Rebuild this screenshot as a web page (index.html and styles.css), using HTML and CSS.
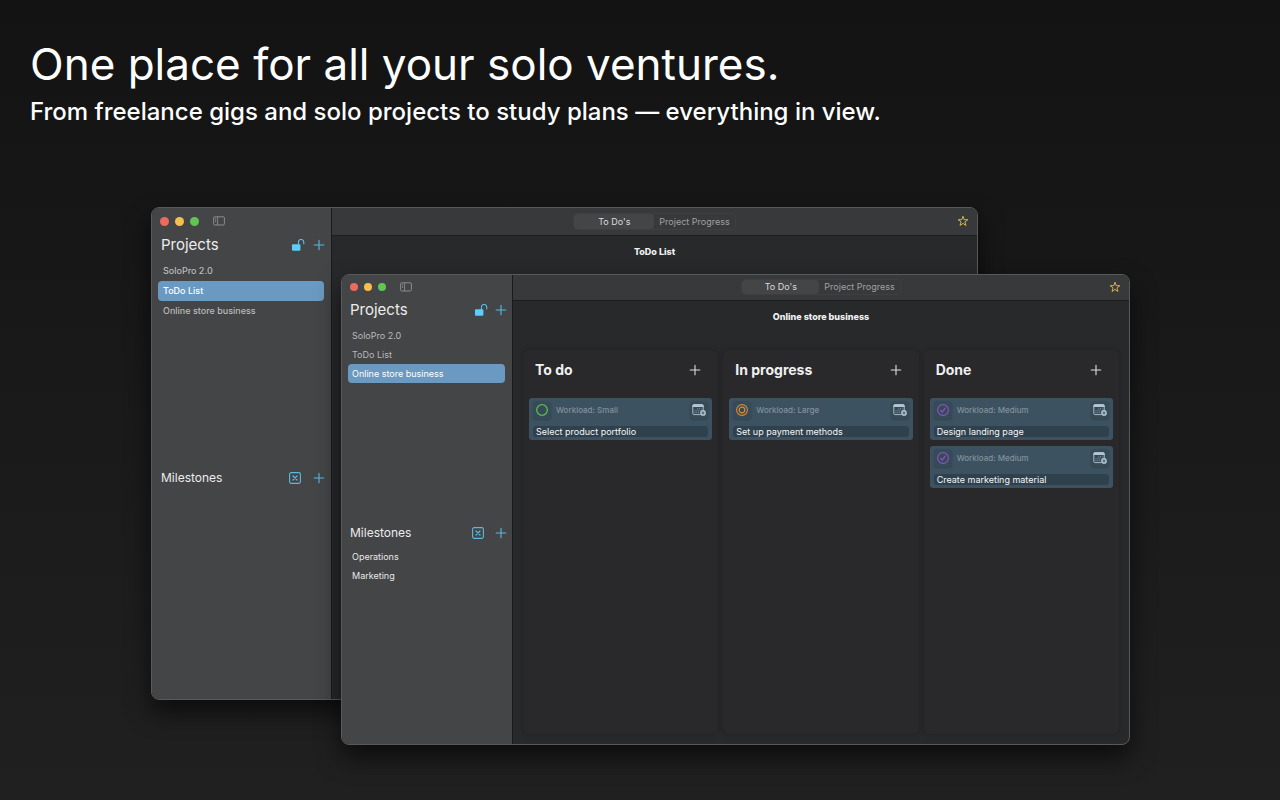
FILE: index.html
```html
<!DOCTYPE html>
<html lang="en">
<head>
<meta charset="utf-8">
<meta name="viewport" content="width=device-width, initial-scale=1">
<title>One place for all your solo ventures.</title>
<link rel="stylesheet" href="styles.css">
</head>
<body>
<svg class="sprite" aria-hidden="true">
  <symbol id="i-plus" viewBox="0 0 12 12"><path d="M6 1.2v9.6M1.2 6h9.6" fill="none" stroke="currentColor" stroke-width="1.1" stroke-linecap="round"/></symbol>
  <symbol id="i-lock" viewBox="0 0 14 14"><rect x="1" y="6.2" width="8.4" height="6.6" rx="1.1" fill="currentColor"/><path d="M7.4 6.4V4.1a2.7 2.7 0 0 1 5.4 0v1.8" fill="none" stroke="currentColor" stroke-width="1" stroke-linecap="round"/></symbol>
  <symbol id="i-xbox" viewBox="0 0 12 12"><rect x=".6" y=".6" width="10.8" height="10.8" rx="1.6" fill="none" stroke="currentColor" stroke-width="1.1"/><path d="M4 4l4 4M8 4L4 8" fill="none" stroke="currentColor" stroke-width="1.2" stroke-linecap="round"/></symbol>
  <symbol id="i-panel" viewBox="0 0 12 10"><rect x=".6" y=".8" width="10.8" height="8.2" rx="1.2" fill="none" stroke="currentColor" stroke-width=".9"/><path d="M4.6 .8v8.2M2 2.7h1.2M2 4.1h1.2M2 5.5h1.2" fill="none" stroke="currentColor" stroke-width=".8"/></symbol>
  <symbol id="i-star" viewBox="0 0 12 12"><path d="M6 1.2l1.2 3.5h3.7l-3 2.2 1.1 3.6L6 8.4l-3 2.1 1.1-3.6-3-2.2h3.7z" fill="none" stroke="currentColor" stroke-width=".9" stroke-linejoin="round"/></symbol>
  <symbol id="i-todo" viewBox="0 0 12 12"><circle cx="6" cy="6" r="5.3" fill="none" stroke="currentColor" stroke-width="1.3"/></symbol>
  <symbol id="i-progress" viewBox="0 0 12 12"><circle cx="6" cy="6" r="5.4" fill="none" stroke="currentColor" stroke-width="1.1"/><circle cx="6" cy="6" r="2.8" fill="none" stroke="currentColor" stroke-width="1.2"/></symbol>
  <symbol id="i-done" viewBox="0 0 12 12"><circle cx="6" cy="6" r="5.4" fill="none" stroke="currentColor" stroke-width="1.1"/><path d="M3.7 6.3l1.6 1.9 3-4.3" fill="none" stroke="currentColor" stroke-width="1.2" stroke-linecap="round" stroke-linejoin="round"/></symbol>
  <symbol id="i-cal" viewBox="0 0 14 12"><path d="M8.2 10.6H2.1A1.3 1.3 0 0 1 .8 9.3V2A1.3 1.3 0 0 1 2.1 .7h7.8A1.3 1.3 0 0 1 11.2 2v4" fill="none" stroke="currentColor" stroke-width=".9"/><path d="M.4 2A1.6 1.6 0 0 1 2 .3h8a1.6 1.6 0 0 1 1.6 1.7v1H.4z" fill="currentColor"/><path d="M5.2 4.9h4.4M2.5 6.8h6M2.5 8.7h5" fill="none" stroke="currentColor" stroke-width=".9" stroke-dasharray="1 .8" opacity=".7"/><circle cx="11" cy="8.9" r="2.9" fill="currentColor"/><path d="M11 7.4v3M9.5 8.9h3" stroke="#2f424e" stroke-width=".8"/></symbol>
</svg>

<header class="hero">
  <h1 class="hero-title">One place for all your solo ventures.</h1>
  <p class="hero-text">From freelance gigs and solo projects to study plans — everything in view.</p>
</header>

<main class="desktop">
  <section class="window window-back" aria-label="ToDo List window">
    <aside class="sidebar">
      <div class="chrome">
        <span class="light red"></span><span class="light yellow"></span><span class="light green"></span>
        <button class="icon-btn panel-btn" aria-label="Toggle sidebar"><svg><use href="#i-panel"/></svg></button>
      </div>
      <div class="projects">
        <div class="side-head">
          <h2 class="side-title">Projects</h2>
          <button class="icon-btn lock-btn" aria-label="Unlock"><svg><use href="#i-lock"/></svg></button>
          <button class="icon-btn" aria-label="Add project"><svg><use href="#i-plus"/></svg></button>
        </div>
        <nav class="list">
          <a class="item" href="#solopro">SoloPro 2.0</a>
          <a class="item selected" href="#todo">ToDo List</a>
          <a class="item" href="#store">Online store business</a>
        </nav>
      </div>
      <div class="milestones">
        <div class="side-head">
          <h2 class="side-subtitle">Milestones</h2>
          <button class="icon-btn" aria-label="Clear milestone"><svg><use href="#i-xbox"/></svg></button>
          <button class="icon-btn" aria-label="Add milestone"><svg><use href="#i-plus"/></svg></button>
        </div>
      </div>
    </aside>
    <div class="content">
      <div class="toolbar">
        <div class="tabs">
          <button class="tab active">To Do's</button><button class="tab">Project Progress</button>
        </div>
        <button class="icon-btn star-btn" aria-label="Favourite"><svg><use href="#i-star"/></svg></button>
      </div>
      <h3 class="project-name">ToDo List</h3>
    </div>
  </section>

  <section class="window window-front" aria-label="Online store business window">
    <aside class="sidebar">
      <div class="chrome">
        <span class="light red"></span><span class="light yellow"></span><span class="light green"></span>
        <button class="icon-btn panel-btn" aria-label="Toggle sidebar"><svg><use href="#i-panel"/></svg></button>
      </div>
      <div class="projects">
        <div class="side-head">
          <h2 class="side-title">Projects</h2>
          <button class="icon-btn lock-btn" aria-label="Unlock"><svg><use href="#i-lock"/></svg></button>
          <button class="icon-btn" aria-label="Add project"><svg><use href="#i-plus"/></svg></button>
        </div>
        <nav class="list">
          <a class="item" href="#solopro">SoloPro 2.0</a>
          <a class="item" href="#todo">ToDo List</a>
          <a class="item selected" href="#store">Online store business</a>
        </nav>
      </div>
      <div class="milestones">
        <div class="side-head">
          <h2 class="side-subtitle">Milestones</h2>
          <button class="icon-btn" aria-label="Clear milestone"><svg><use href="#i-xbox"/></svg></button>
          <button class="icon-btn" aria-label="Add milestone"><svg><use href="#i-plus"/></svg></button>
        </div>
        <nav class="list">
          <a class="item bright" href="#operations">Operations</a>
          <a class="item bright" href="#marketing">Marketing</a>
        </nav>
      </div>
    </aside>
    <div class="content">
      <div class="toolbar">
        <div class="tabs">
          <button class="tab active">To Do's</button><button class="tab">Project Progress</button>
        </div>
        <button class="icon-btn star-btn" aria-label="Favourite"><svg><use href="#i-star"/></svg></button>
      </div>
      <h3 class="project-name">Online store business</h3>
      <div class="board">
        <section class="column">
          <div class="column-head">
            <h4 class="column-title">To do</h4>
            <button class="icon-btn" aria-label="Add to do"><svg><use href="#i-plus"/></svg></button>
          </div>
          <article class="card">
            <div class="card-top">
              <button class="chip todo" aria-label="To do"><svg><use href="#i-todo"/></svg></button>
              <span class="workload">Workload: Small</span>
              <button class="chip cal" aria-label="Add date"><svg><use href="#i-cal"/></svg></button>
            </div>
            <p class="card-title">Select product portfolio</p>
          </article>
        </section>
        <section class="column">
          <div class="column-head">
            <h4 class="column-title">In progress</h4>
            <button class="icon-btn" aria-label="Add in progress"><svg><use href="#i-plus"/></svg></button>
          </div>
          <article class="card">
            <div class="card-top">
              <button class="chip progress" aria-label="In progress"><svg><use href="#i-progress"/></svg></button>
              <span class="workload">Workload: Large</span>
              <button class="chip cal" aria-label="Add date"><svg><use href="#i-cal"/></svg></button>
            </div>
            <p class="card-title">Set up payment methods</p>
          </article>
        </section>
        <section class="column">
          <div class="column-head">
            <h4 class="column-title">Done</h4>
            <button class="icon-btn" aria-label="Add done"><svg><use href="#i-plus"/></svg></button>
          </div>
          <article class="card">
            <div class="card-top">
              <button class="chip done" aria-label="Done"><svg><use href="#i-done"/></svg></button>
              <span class="workload">Workload: Medium</span>
              <button class="chip cal" aria-label="Add date"><svg><use href="#i-cal"/></svg></button>
            </div>
            <p class="card-title">Design landing page</p>
          </article>
          <article class="card">
            <div class="card-top">
              <button class="chip done" aria-label="Done"><svg><use href="#i-done"/></svg></button>
              <span class="workload">Workload: Medium</span>
              <button class="chip cal" aria-label="Add date"><svg><use href="#i-cal"/></svg></button>
            </div>
            <p class="card-title">Create marketing material</p>
          </article>
        </section>
      </div>
    </div>
  </section>
</main>
</body>
</html>
```

FILE: styles.css
```css
* { box-sizing: border-box; }

body {
  margin: 0;
  min-height: 100vh;
  display: flex;
  flex-direction: column;
  background: linear-gradient(#131313, #202020);
  color: #fff;
  font-family: Inter, "Liberation Sans", sans-serif;
}

h1, h2, h3, h4, p { margin: 0; }
button { margin: 0; padding: 0; border: 0; background: none; color: inherit; font: inherit; }
a { color: inherit; text-decoration: none; }
svg { display: block; }
.sprite { position: absolute; width: 0; height: 0; }

.hero { padding: 36px 30px 0; }
.hero-title { font-size: 44px; line-height: 56px; font-weight: 400; }
.hero-text { padding-top: 2px; font-size: 24px; line-height: 36px; font-weight: 500; }

.desktop { position: relative; flex: 1; min-height: 670px; }

.window {
  position: absolute;
  display: grid;
  border: 1px solid #58595a;
  border-radius: 8px;
  overflow: hidden;
  background: #28292b;
  box-shadow: 0 12px 24px rgba(0, 0, 0, .6);
}
.window-back {
  --row: 20px;
  --bar: 27px;
  --light: 9px;
  --edge: 6px;
  --icon-gap: 12px;
  top: 77px;
  left: 151px;
  width: 827px;
  height: 493px;
  grid-template-columns: 180px 1fr;
}
.window-front {
  --row: 19px;
  --bar: 25px;
  --light: 8px;
  --edge: 5px;
  --icon-gap: 11px;
  top: 144px;
  left: 341px;
  width: 789px;
  height: 471px;
  grid-template-columns: 171px 1fr;
}

.sidebar {
  display: flex;
  flex-direction: column;
  background: #444546;
  border-right: 1px solid #191a1b;
}
.chrome { display: flex; align-items: center; gap: 6px; height: var(--bar); padding: 0 0 1px 8px; }
.light { width: var(--light); height: var(--light); border-radius: 50%; }
.red { background: #ed6a5e; }
.yellow { background: #f5be4f; }
.green { background: #61c554; }
.panel-btn { margin-left: 8px; color: #929394; }

.side-head {
  display: flex;
  align-items: center;
  gap: var(--icon-gap);
  padding: 0 var(--edge) 0 9px;
  color: #5ab9e0;
}
.window-front .side-head { padding-left: 8px; }
.side-title, .side-subtitle { flex: 1; color: #ececec; }
.side-title { font-size: 15px; line-height: 20px; font-weight: 400; }
.side-subtitle { font-size: 12px; line-height: 18px; font-weight: 400; }
.icon-btn svg { width: 12px; height: 12px; }
.icon-btn.panel-btn svg { height: 10px; }
.icon-btn.lock-btn svg { width: 14px; height: 14px; }
.lock-btn { margin-right: -4px; color: #5fcdfb; }

.list { display: flex; flex-direction: column; padding: 6px 7px 0 6px; }
.item {
  height: var(--row);
  line-height: var(--row);
  padding-left: 5px;
  border-radius: 4px;
  color: #b9babb;
  font-size: 9px;
}
.window-back .item { font-weight: 500; }
.window-front .item { padding-left: 4px; }
.item.selected { background: #6a99c1; color: #fff; }
.item.bright { color: #e8e8e8; }

.projects { flex: 1; }
.window-back .milestones { height: 230px; }
.window-front .milestones { height: 220px; }
.milestones .list { padding-top: 5px; }

.content { display: flex; flex-direction: column; min-width: 0; }
.toolbar {
  display: grid;
  grid-template-columns: 1fr auto 1fr;
  align-items: center;
  height: var(--bar);
  padding: 0 8px 1px;
  background: #38393b;
  box-shadow: 0 1px 0 #1c1d1e;
}
.tabs { grid-column: 2; display: flex; border-radius: 4px; border: 1px solid #3e3f41; color: #a0a1a2; }
.tab { padding: 0 5px; font-size: 9px; line-height: 15px; }
.window-front .tab { line-height: 14px; }
.tab.active { width: 80px; border-radius: 4px; background: #444547; color: #dcdcdc; }
.window-front .tab.active { width: 77px; }
.star-btn { justify-self: end; color: #e4bd45; }
.project-name { padding-top: 9px; text-align: center; font-size: 9px; line-height: 16px; font-weight: 800; color: #f0f0f0; }

.board {
  flex: 1;
  display: grid;
  grid-template-columns: repeat(3, 1fr);
  gap: 5px;
  padding: 25px 10px 10px;
}
.column {
  display: flex;
  flex-direction: column;
  gap: 6px;
  padding: 6px;
  border-radius: 6px;
  background: #29292b;
  box-shadow: 0 0 5px rgba(0, 0, 0, .22);
}
.column-head {
  display: flex;
  align-items: center;
  justify-content: space-between;
  height: 28px;
  margin-bottom: 8px;
  padding: 0 11px 0 6px;
  color: #dedede;
}
.column-title { font-size: 14px; line-height: 20px; font-weight: 700; color: #f0f0f0; }
.card { padding: 3px 4px; border-radius: 3px; background: #3d5260; }
.card-top { display: flex; align-items: center; gap: 5px; height: 18px; }
.chip {
  display: grid;
  place-items: center;
  width: 18px;
  height: 18px;
  border-radius: 4px;
  background: #364a57;
  box-shadow: 0 1px 2px rgba(0, 0, 0, .2);
}
.chip svg { width: 12px; height: 12px; }
.chip.cal svg { width: 14px; }
.chip.todo { color: #59bd50; }
.chip.progress { color: #d98c33; }
.chip.done { color: #8d52c4; }
.chip.cal { color: #b3c6d0; }
.workload { flex: 1; font-size: 8px; line-height: 12px; font-weight: 500; color: #82919b; }
.card-title {
  margin-top: 7px;
  padding-left: 3px;
  border-radius: 3px;
  background: #30414e;
  color: #f4f4f4;
  font-size: 9px;
  line-height: 11px;
}
```
